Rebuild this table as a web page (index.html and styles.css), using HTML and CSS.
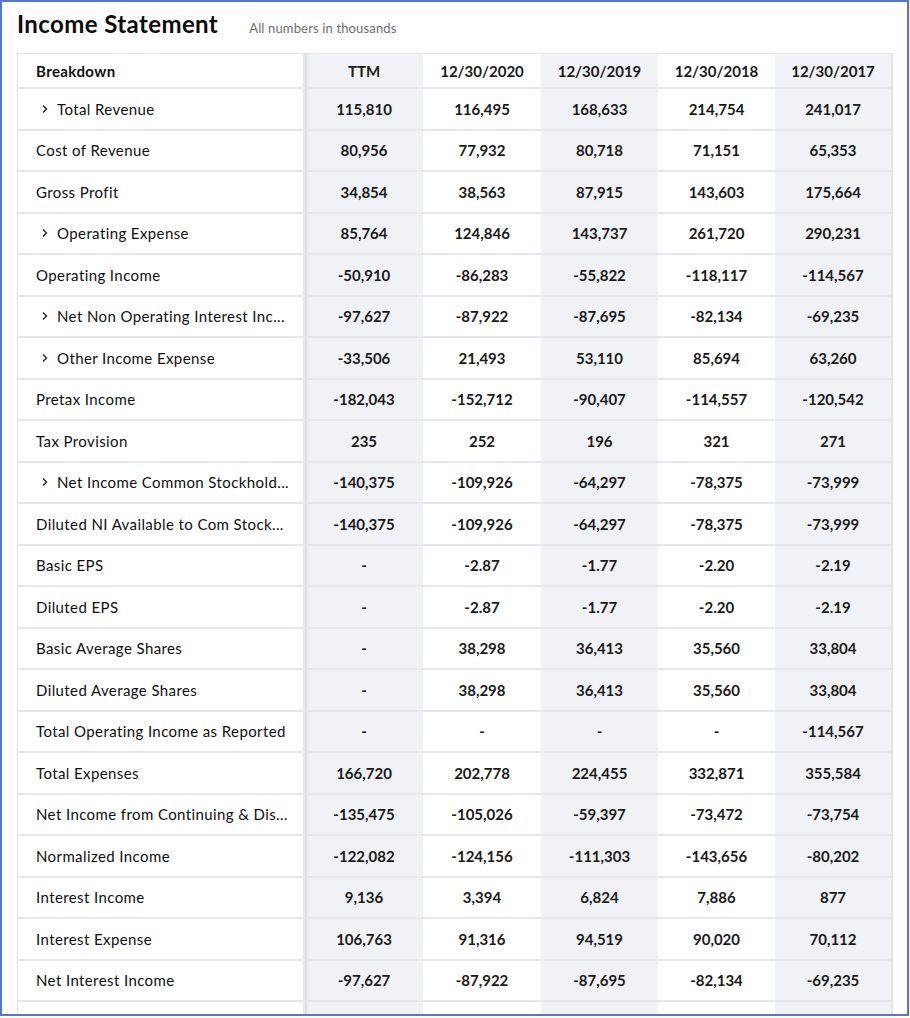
FILE: index.html
```html
<!DOCTYPE html>
<html lang="en">
<head>
<meta charset="utf-8">
<title>Income Statement</title>
<link rel="stylesheet" href="styles.css">
</head>
<body>
<div class="frame">
  <div class="head">
    <h1 class="title">Income Statement</h1>
    <span class="note">All numbers in thousands</span>
  </div>
  <div class="table">
    <div class="row hdr">
      <div class="cell label">Breakdown</div>
      <div class="cell">TTM</div><div class="cell">12/30/2020</div><div class="cell">12/30/2019</div><div class="cell">12/30/2018</div><div class="cell">12/30/2017</div>
    </div>
    <div class="row">
      <div class="cell label exp"><svg class="chev" viewBox="0 0 6 10"><polyline points="1,1.5 4.5,5 1,8.5"/></svg>Total Revenue</div>
      <div class="cell">115,810</div><div class="cell">116,495</div><div class="cell">168,633</div><div class="cell">214,754</div><div class="cell">241,017</div>
    </div>
    <div class="row">
      <div class="cell label">Cost of Revenue</div>
      <div class="cell">80,956</div><div class="cell">77,932</div><div class="cell">80,718</div><div class="cell">71,151</div><div class="cell">65,353</div>
    </div>
    <div class="row">
      <div class="cell label">Gross Profit</div>
      <div class="cell">34,854</div><div class="cell">38,563</div><div class="cell">87,915</div><div class="cell">143,603</div><div class="cell">175,664</div>
    </div>
    <div class="row">
      <div class="cell label exp"><svg class="chev" viewBox="0 0 6 10"><polyline points="1,1.5 4.5,5 1,8.5"/></svg>Operating Expense</div>
      <div class="cell">85,764</div><div class="cell">124,846</div><div class="cell">143,737</div><div class="cell">261,720</div><div class="cell">290,231</div>
    </div>
    <div class="row">
      <div class="cell label">Operating Income</div>
      <div class="cell">-50,910</div><div class="cell">-86,283</div><div class="cell">-55,822</div><div class="cell">-118,117</div><div class="cell">-114,567</div>
    </div>
    <div class="row">
      <div class="cell label exp"><svg class="chev" viewBox="0 0 6 10"><polyline points="1,1.5 4.5,5 1,8.5"/></svg>Net Non Operating Interest Inc...</div>
      <div class="cell">-97,627</div><div class="cell">-87,922</div><div class="cell">-87,695</div><div class="cell">-82,134</div><div class="cell">-69,235</div>
    </div>
    <div class="row">
      <div class="cell label exp"><svg class="chev" viewBox="0 0 6 10"><polyline points="1,1.5 4.5,5 1,8.5"/></svg>Other Income Expense</div>
      <div class="cell">-33,506</div><div class="cell">21,493</div><div class="cell">53,110</div><div class="cell">85,694</div><div class="cell">63,260</div>
    </div>
    <div class="row">
      <div class="cell label">Pretax Income</div>
      <div class="cell">-182,043</div><div class="cell">-152,712</div><div class="cell">-90,407</div><div class="cell">-114,557</div><div class="cell">-120,542</div>
    </div>
    <div class="row">
      <div class="cell label">Tax Provision</div>
      <div class="cell">235</div><div class="cell">252</div><div class="cell">196</div><div class="cell">321</div><div class="cell">271</div>
    </div>
    <div class="row">
      <div class="cell label exp"><svg class="chev" viewBox="0 0 6 10"><polyline points="1,1.5 4.5,5 1,8.5"/></svg>Net Income Common Stockhold...</div>
      <div class="cell">-140,375</div><div class="cell">-109,926</div><div class="cell">-64,297</div><div class="cell">-78,375</div><div class="cell">-73,999</div>
    </div>
    <div class="row">
      <div class="cell label">Diluted NI Available to Com Stock...</div>
      <div class="cell">-140,375</div><div class="cell">-109,926</div><div class="cell">-64,297</div><div class="cell">-78,375</div><div class="cell">-73,999</div>
    </div>
    <div class="row">
      <div class="cell label">Basic EPS</div>
      <div class="cell">-</div><div class="cell">-2.87</div><div class="cell">-1.77</div><div class="cell">-2.20</div><div class="cell">-2.19</div>
    </div>
    <div class="row">
      <div class="cell label">Diluted EPS</div>
      <div class="cell">-</div><div class="cell">-2.87</div><div class="cell">-1.77</div><div class="cell">-2.20</div><div class="cell">-2.19</div>
    </div>
    <div class="row">
      <div class="cell label">Basic Average Shares</div>
      <div class="cell">-</div><div class="cell">38,298</div><div class="cell">36,413</div><div class="cell">35,560</div><div class="cell">33,804</div>
    </div>
    <div class="row">
      <div class="cell label">Diluted Average Shares</div>
      <div class="cell">-</div><div class="cell">38,298</div><div class="cell">36,413</div><div class="cell">35,560</div><div class="cell">33,804</div>
    </div>
    <div class="row">
      <div class="cell label">Total Operating Income as Reported</div>
      <div class="cell">-</div><div class="cell">-</div><div class="cell">-</div><div class="cell">-</div><div class="cell">-114,567</div>
    </div>
    <div class="row">
      <div class="cell label">Total Expenses</div>
      <div class="cell">166,720</div><div class="cell">202,778</div><div class="cell">224,455</div><div class="cell">332,871</div><div class="cell">355,584</div>
    </div>
    <div class="row">
      <div class="cell label">Net Income from Continuing &amp; Dis...</div>
      <div class="cell">-135,475</div><div class="cell">-105,026</div><div class="cell">-59,397</div><div class="cell">-73,472</div><div class="cell">-73,754</div>
    </div>
    <div class="row">
      <div class="cell label">Normalized Income</div>
      <div class="cell">-122,082</div><div class="cell">-124,156</div><div class="cell">-111,303</div><div class="cell">-143,656</div><div class="cell">-80,202</div>
    </div>
    <div class="row">
      <div class="cell label">Interest Income</div>
      <div class="cell">9,136</div><div class="cell">3,394</div><div class="cell">6,824</div><div class="cell">7,886</div><div class="cell">877</div>
    </div>
    <div class="row">
      <div class="cell label">Interest Expense</div>
      <div class="cell">106,763</div><div class="cell">91,316</div><div class="cell">94,519</div><div class="cell">90,020</div><div class="cell">70,112</div>
    </div>
    <div class="row">
      <div class="cell label">Net Interest Income</div>
      <div class="cell">-97,627</div><div class="cell">-87,922</div><div class="cell">-87,695</div><div class="cell">-82,134</div><div class="cell">-69,235</div>
    </div>
    <div class="row">
      <div class="cell label"></div>
      <div class="cell"></div><div class="cell"></div><div class="cell"></div><div class="cell"></div><div class="cell"></div>
    </div>
  </div>
</div>
</body>
</html>
```
FILE: styles.css
```css
html, body {
  margin: 0;
  padding: 0;
  background: #ffffff;
}

body {
  font-family: Lato, "Open Sans", "Liberation Sans", sans-serif;
  color: #161616;
}

.frame {
  width: 909px;
  height: 1016px;
  box-sizing: border-box;
  border: 2px solid #5577cd;
  overflow: hidden;
  padding-left: 15px;
  background: #ffffff;
}

.head {
  height: 51px;
  box-sizing: border-box;
  padding-top: 7px;
  display: flex;
  align-items: baseline;
  gap: 31px;
}

.title {
  margin: 0;
  font-size: 24px;
  line-height: 30px;
  font-weight: 700;
  color: #0c0c0c;
  letter-spacing: 0.4px;
}

.note {
  font-size: 13px;
  color: #6e6e6e;
  letter-spacing: 0.15px;
}

.table {
  width: 876px;
  box-sizing: border-box;
  border-top: 1px solid #e2e5e9;
  border-left: 1px solid #e2e5e9;
  border-right: 2px solid #e2e5e9;
}

.row {
  display: grid;
  grid-template-columns: 287px 118px 118px 117px 117px 116px;
  height: 41.5px;
  box-sizing: border-box;
  border-bottom: 2px solid #e4e7eb;
}

.row.hdr {
  height: 35px;
}

.cell {
  display: flex;
  align-items: center;
  justify-content: center;
  font-size: 15px;
  font-weight: 700;
  color: #1a1a1a;
  white-space: nowrap;
}

.cell:nth-child(even) {
  background: #f0f2f5;
}

.cell:nth-child(2) {
  box-shadow: inset 5px 0 4px -4px rgba(0, 0, 0, 0.14);
}

.cell.label {
  justify-content: flex-start;
  padding-left: 18px;
  font-weight: 400;
  color: #0f0f0f;
  border-right: 2px solid #e4e7eb;
  letter-spacing: 0.4px;
}

.hdr .cell.label {
  font-weight: 700;
}

.cell.exp {
  padding-left: 24px;
  gap: 9px;
}

.chev {
  width: 6px;
  height: 10px;
  flex: none;
}

.chev polyline {
  fill: none;
  stroke: #222222;
  stroke-width: 1.4;
}
```
